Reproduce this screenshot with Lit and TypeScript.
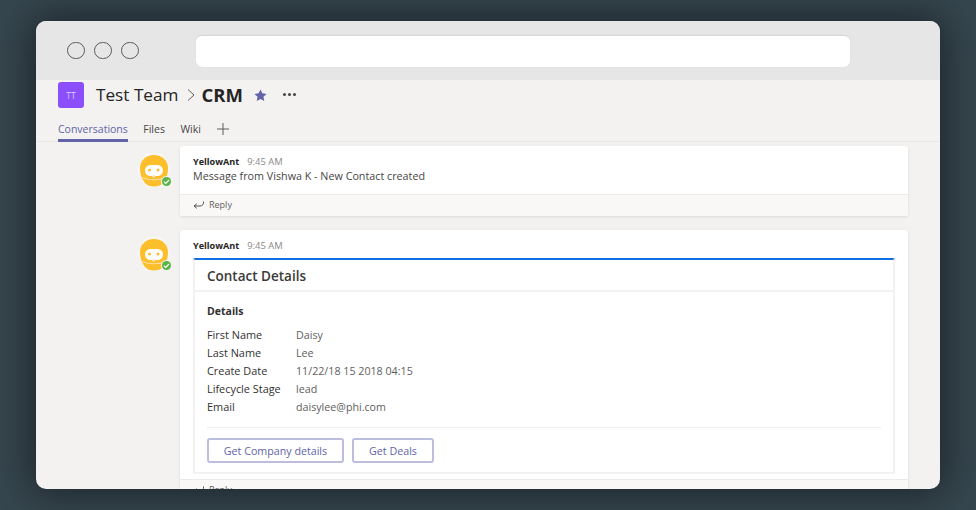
import { LitElement, html, css, svg } from "lit";
import { customElement } from "lit/decorators.js";

const rows = [
  ["First Name", "Daisy"],
  ["Last Name", "Lee"],
  ["Create Date", "11/22/18 15 2018 04:15"],
  ["Lifecycle Stage", "lead"],
  ["Email", "daisylee@phi.com"],
];

const bot = html`<div class="avatar">
  <svg width="36" height="36" viewBox="0 0 36 36">
    <path d="M10 1h16l9 17-9 17H10L1 18z" fill="#f8f7f6" />
    <path d="M18 3c8.500 0 14 6 14 13 0 7-2 11-5 15-2 2.500-5 3.500-9 3.500s-7-1-9-3.500c-3-4-5-8-5-15C4 9 9.500 3 18 3z" fill="#fdbe2c" />
    <rect x="9" y="13" width="18" height="11" rx="5.500" fill="#fff" />
    <circle cx="13.500" cy="18" r="1.500" fill="#fdbe2c" />
    <circle cx="22" cy="18" r="1.500" fill="#fdbe2c" />
    <circle cx="17.750" cy="24" r="1.600" fill="#feeec8" />
    <path d="M6.500 25.500c6 3 17 3 23 0" fill="none" stroke="#ffe3a3" stroke-width="1.200" />
  </svg>
  <span class="status">
    <svg width="9" height="9" viewBox="0 0 9 9"><path d="M2 4.600l1.800 1.800L7 3" fill="none" stroke="#fff" stroke-width="1.200" /></svg>
  </span>
</div>`;

const replyIcon = svg`<path d="M10.500 1.500c.5 2.500-1 4.500-3.500 4.500H1M1 6l2.800-2.300M1 6l2.800 2.300" fill="none" stroke="#555" stroke-width="1" />`;

const reply = html`<div class="reply">
  <svg width="11" height="10" viewBox="0 0 11 10">${replyIcon}</svg>
  <span>Reply</span>
</div>`;

@customElement("app-root")
export class AppRoot extends LitElement {
  static styles = css`
    :host {
      display: block;
      width: 976px;
      height: 510px;
      padding: 21px 36px;
      box-sizing: border-box;
      background: #37474f;
      font-family: "Open Sans", "Noto Sans", sans-serif;
      overflow: hidden;
    }
    .window {
      width: 904px;
      height: 468px;
      border-radius: 10px;
      overflow: hidden;
      background: #f3f2f1;
      box-shadow: 0 0 40px 6px rgba(20, 26, 32, 0.75);
      display: flex;
      flex-direction: column;
    }
    .chrome {
      height: 59px;
      flex: none;
      background: #e6e6e6;
      display: flex;
      align-items: center;
      padding: 0 0 0 31px;
      box-sizing: border-box;
    }
    .dots {
      display: flex;
      gap: 9.500px;
      width: 129px;
      flex: none;
    }
    .dot {
      width: 17.500px;
      height: 17.500px;
      box-sizing: border-box;
      border: 1.700px solid #5a5a5a;
      border-radius: 50%;
    }
    .address {
      width: 654px;
      height: 32px;
      box-sizing: border-box;
      background: #fff;
      border-radius: 6px;
      border-top: 1px solid #d8d8d8;
      box-shadow: 0 0 1px #ccc;
    }
    .team {
      display: flex;
      align-items: center;
      height: 26px;
      margin: 2px 0 0 22px;
      flex: none;
    }
    .tile {
      width: 26px;
      height: 26px;
      border-radius: 3px;
      background: #8b50fb;
      color: #dccdfd;
      font-size: 8.500px;
      display: flex;
      align-items: center;
      justify-content: center;
      margin-right: 12px;
    }
    .t-name {
      font-size: 17.200px;
      color: #252423;
      padding-bottom: 2px;
    }
    .chev {
      margin: 0 6px 0 9px;
    }
    .t-chan {
      font-size: 18.500px;
      font-weight: 700;
      color: #252423;
      padding-bottom: 2px;
    }
    .star {
      margin: 0 0 1px 11px;
    }
    .more {
      margin: 0 0 1px 16px;
      display: flex;
      gap: 2px;
    }
    .more i {
      width: 3px;
      height: 3px;
      border-radius: 50%;
      background: #484644;
    }
    .tabs {
      height: 34px;
      flex: none;
      box-sizing: border-box;
      border-bottom: 1px solid #e8e7e6;
      padding: 0 0 0 22px;
      display: flex;
      align-items: flex-end;
      gap: 15.500px;
      font-size: 10.500px;
      color: #484644;
    }
    .tab {
      height: 25px;
      box-sizing: border-box;
      padding-top: 5px;
      margin-bottom: -1px;
    }
    .tab.on {
      color: #6264a7;
      border-bottom: 3px solid #6264a7;
    }
    .plus {
      margin: 0 0 6px 1px;
      height: 12px;
    }
    .list {
      flex: 1;
      min-height: 0;
      overflow: hidden;
      padding: 4px 32px 0 100px;
      display: flex;
      flex-direction: column;
      gap: 14px;
    }
    .msg {
      display: flex;
      flex: none;
      align-items: flex-start;
    }
    .avatar {
      width: 36px;
      height: 36px;
      margin: 6px 8px 0 0;
      position: relative;
      flex: none;
    }
    .avatar > svg {
      display: block;
    }
    .status {
      position: absolute;
      right: 1px;
      bottom: 2px;
      width: 9px;
      height: 9px;
      border-radius: 50%;
      background: #5cb448;
      box-shadow: 0 0 0 1px #f3f2f1;
      display: flex;
    }
    .card {
      width: 728px;
      background: #fff;
      border-radius: 3px;
      box-shadow: 0 1px 3px rgba(0, 0, 0, 0.1);
      flex: none;
    }
    .body {
      padding: 8px 13px 0;
    }
    .meta {
      display: flex;
      align-items: baseline;
      gap: 8px;
      height: 15px;
      line-height: 15px;
    }
    .who {
      font-size: 9.100px;
      font-weight: 700;
      color: #252423;
    }
    .time {
      font-size: 9.400px;
      color: #8a8886;
    }
    .text {
      font-size: 10.750px;
      line-height: 15px;
      color: #484644;
      padding-bottom: 10px;
    }
    .reply {
      height: 22px;
      box-sizing: border-box;
      border-top: 1px solid #eaeaea;
      background: #f9f8f7;
      padding: 0 0 2px 13px;
      display: flex;
      align-items: center;
      gap: 5px;
      font-size: 9px;
      color: #605e5c;
    }
    .adaptive {
      width: 702px;
      height: 216px;
      box-sizing: border-box;
      margin: 5px 0;
      border: 2px solid #f2f1f0;
      border-top: 2px solid #0f6fe6;
      border-radius: 2px;
    }
    .a-title {
      height: 32px;
      box-sizing: border-box;
      padding-left: 12px;
      font-size: 13.500px;
      line-height: 32px;
      font-weight: 600;
      color: #3b3a39;
      border-bottom: 2px solid #f3f2f1;
    }
    .a-body {
      padding: 0 12px;
    }
    .a-head {
      font-size: 10.500px;
      font-weight: 700;
      color: #323130;
      line-height: 16px;
      margin-top: 11px;
    }
    .facts {
      display: grid;
      grid-template-columns: 89px 1fr;
      grid-auto-rows: 18px;
      margin-top: 7px;
      font-size: 10.900px;
      line-height: 18px;
      color: #323130;
      height: 90px;
    }
    .val {
      font-size: 10.700px;
      color: #605e5c;
    }
    .rule {
      height: 1px;
      background: #eeeeee;
      margin-top: 11px;
    }
    .btns {
      display: flex;
      gap: 8px;
      margin-top: 10px;
    }
    .btn {
      height: 25px;
      box-sizing: border-box;
      border: 2px solid #bdbde0;
      border-radius: 3px;
      background: #fff;
      color: #6264a7;
      font-size: 10.700px;
      display: flex;
      align-items: center;
      justify-content: center;
    }
    .b1 {
      width: 137px;
    }
    .b2 {
      width: 82px;
    }
  `;

  render() {
    return html`<div class="window">
      <div class="chrome">
        <div class="dots"><span class="dot"></span><span class="dot"></span><span class="dot"></span></div>
        <div class="address"></div>
      </div>
      <div class="team">
        <div class="tile">TT</div>
        <span class="t-name">Test Team</span>
        <svg class="chev" width="8" height="12" viewBox="0 0 8 12"><path d="M1 .5l6 5.500-6 5.500" fill="none" stroke="#605e5c" stroke-width="1" /></svg>
        <span class="t-chan">CRM</span>
        <svg class="star" width="13" height="12" viewBox="0 0 14 13"><path d="M7 .5l2 4.200 4.600.6-3.400 3.100.9 4.500L7 10.700l-4.100 2.200.9-4.500L.4 5.300 5 4.700z" fill="#6264a7" /></svg>
        <span class="more"><i></i><i></i><i></i></span>
      </div>
      <div class="tabs">
        <span class="tab on">Conversations</span>
        <span class="tab">Files</span>
        <span class="tab">Wiki</span>
        <svg class="plus" width="12" height="12" viewBox="0 0 12 12"><path d="M6 0v12M0 6h12" stroke="#605e5c" stroke-width="1" /></svg>
      </div>
      <div class="list">
        <div class="msg">
          ${bot}
          <div class="card">
            <div class="body">
              <div class="meta"><span class="who">YellowAnt</span><span class="time">9:45 AM</span></div>
              <div class="text">Message from Vishwa K - New Contact created</div>
            </div>
            ${reply}
          </div>
        </div>
        <div class="msg">
          ${bot}
          <div class="card">
            <div class="body">
              <div class="meta"><span class="who">YellowAnt</span><span class="time">9:45 AM</span></div>
              <div class="adaptive">
                <div class="a-title">Contact Details</div>
                <div class="a-body">
                  <div class="a-head">Details</div>
                  <div class="facts">
                    ${rows.map(([k, v]) => html`<span>${k}</span><span class="val">${v}</span>`)}
                  </div>
                  <div class="rule"></div>
                  <div class="btns">
                    <div class="btn b1">Get Company details</div>
                    <div class="btn b2">Get Deals</div>
                  </div>
                </div>
              </div>
            </div>
            ${reply}
          </div>
        </div>
      </div>
    </div>`;
  }
}
